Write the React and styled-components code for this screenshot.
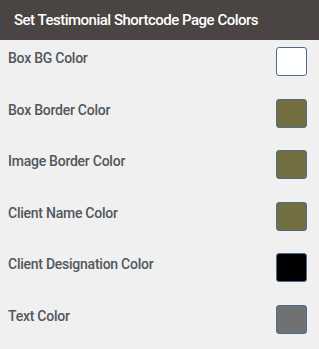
import React from "react";
import styled, { createGlobalStyle } from "styled-components";

const Global = createGlobalStyle`
  html, body { margin: 0; padding: 0; background: #f0f0f0; }
  body { font-family: Roboto, "Noto Sans", Arial, sans-serif; }
`;

const Panel = styled.div`
  width: 319px;
  height: 349px;
  background: #f0f0f0;
  overflow: hidden;
`;

const Header = styled.div`
  height: 40px;
  box-sizing: border-box;
  background: #4a4542;
  border-left: 1px solid #3e4a56;
  display: flex;
  align-items: center;
  padding-left: 13px;
  color: #ffffff;
  font-size: 15px;
  font-weight: 500;
  letter-spacing: -0.5px;
`;

const List = styled.div`
  display: flex;
  flex-direction: column;
  padding-top: 3px;
`;

const Row = styled.div`
  height: 51.6px;
  display: flex;
  justify-content: space-between;
  align-items: flex-start;
  padding: 0 12px 0 8px;
`;

const Label = styled.span`
  margin-top: 5px;
  font-size: 14px;
  line-height: 20px;
  font-weight: 500;
  letter-spacing: -0.25px;
  color: #50575e;
`;

const Swatch = styled.div`
  margin-top: 4px;
  width: 31px;
  height: 29px;
  box-sizing: border-box;
  border: 1px solid #4f6d8a;
  border-radius: 3px;
  background: ${(p) => p.$color};
`;

const rows = [
  ["Box BG Color", "#ffffff"],
  ["Box Border Color", "#736e3f"],
  ["Image Border Color", "#736e3f"],
  ["Client Name Color", "#736e3f"],
  ["Client Designation Color", "#000000"],
  ["Text Color", "#717171"],
];

export default function App() {
  return (
    <Panel>
      <Global />
      <Header>Set Testimonial Shortcode Page Colors</Header>
      <List>
        {rows.map(([label, color]) => (
          <Row key={label}>
            <Label>{label}</Label>
            <Swatch $color={color} />
          </Row>
        ))}
      </List>
    </Panel>
  );
}
